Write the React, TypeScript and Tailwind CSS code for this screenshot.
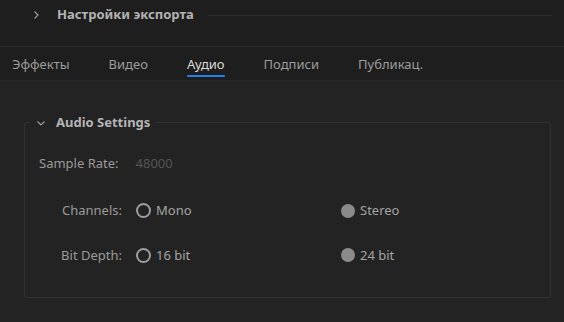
import { useState } from 'react';

const tabs = ['Эффекты', 'Видео', 'Аудио', 'Подписи', 'Публикац.'];

export default function App() {
  const [active, setActive] = useState('Аудио');

  return (
    <div
      className="flex h-[322px] w-[564px] flex-col overflow-hidden bg-[#1e1e1e] text-[13px] text-[#9a9a9a]"
      style={{ fontFamily: '"Noto Sans", "Open Sans", sans-serif' }}
    >
      {/* Export settings header */}
      <div className="flex h-[47px] shrink-0 items-start border-b border-[#2a2a2a] pt-[5px] pr-[12px] pl-[31px]">
        <div className="flex h-[20px] w-full items-center">
          <Chevron dir="right" />
          <span className="ml-[16px] text-[13px] font-bold text-[#b4b4b4]">
            Настройки экспорта
          </span>
          <div className="ml-[14px] h-px flex-1 bg-[#2c2c2c]" />
        </div>
      </div>

      {/* Tabs */}
      <div className="flex h-[34px] shrink-0 items-stretch gap-[39px] border-b border-[#2a2a2a] pl-[12px]">
        {tabs.map((t) => (
          <button
            key={t}
            onClick={() => setActive(t)}
            className={
              'relative flex items-center pt-[3px] ' +
              (t === active ? 'text-[#dadada]' : 'text-[#9c9c9c]')
            }
          >
            {t}
            {t === active && (
              <span className="absolute right-0 bottom-[3px] left-0 h-[2px] rounded-full bg-[#2680eb]" />
            )}
          </button>
        ))}
      </div>

      {/* Audio settings group */}
      <div className="flex-1 bg-[#232323] pt-[32px] pr-[13px] pl-[24px]">
        <fieldset className="h-[185px] rounded-[2px] border border-[#313131] pb-0">
          <legend className="ml-[5px] flex items-center px-[6px]">
            <Chevron dir="down" />
            <span className="ml-[10px] font-bold text-[#b4b4b4]">
              Audio Settings
            </span>
          </legend>

          <div className="flex items-center pt-[21px] pl-[14px]">
            <span>Sample Rate:</span>
            <span className="ml-[17px] text-[#555555]">48000</span>
          </div>

          <div className="mt-[28px] flex items-center">
            <span className="w-[97px] text-right">Channels:</span>
            <Radio label="Mono" className="ml-[14px] w-[205px]" />
            <Radio label="Stereo" checked />
          </div>

          <div className="mt-[25px] flex items-center">
            <span className="w-[97px] text-right">Bit Depth:</span>
            <Radio label="16 bit" className="ml-[14px] w-[205px]" />
            <Radio label="24 bit" checked />
          </div>
        </fieldset>
      </div>
    </div>
  );
}

function Radio({
  label,
  checked,
  className = '',
}: {
  label: string;
  checked?: boolean;
  className?: string;
}) {
  return (
    <span className={'flex items-center gap-[5px] ' + className}>
      {checked ? (
        <span className="box-border h-[14px] w-[14px] rounded-full bg-[#8b8b8b]" />
      ) : (
        <span className="box-border h-[15px] w-[15px] rounded-full border-2 border-[#9c9c9c]" />
      )}
      <span className="text-[#a3a3a3]">{label}</span>
    </span>
  );
}

function Chevron({ dir }: { dir: 'right' | 'down' }) {
  return (
    <svg width="10" height="10" viewBox="0 0 10 10" fill="none">
      <path
        d={dir === 'right' ? 'M3.5 1.5 L7 5 L3.5 8.5' : 'M1.5 3.5 L5 7 L8.5 3.5'}
        stroke="#9a9a9a"
        strokeWidth="1.2"
      />
    </svg>
  );
}
